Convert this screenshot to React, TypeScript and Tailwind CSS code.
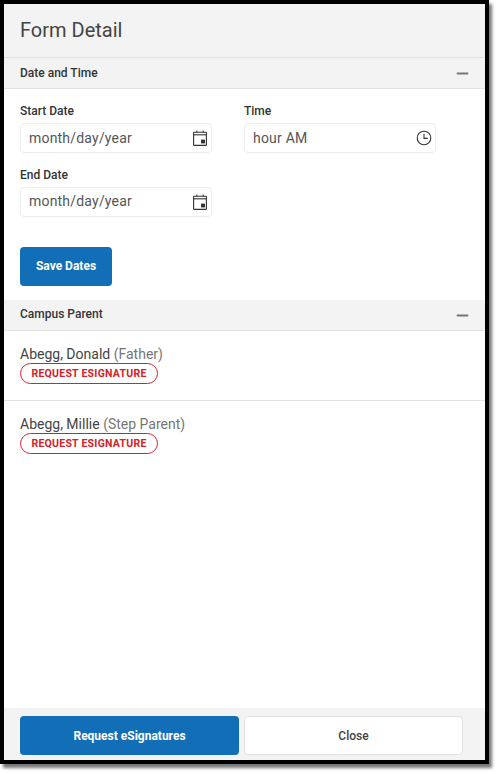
import { Minus } from "lucide-react"

function CalendarIcon() {
  return (
    <svg width="16" height="17" viewBox="0 0 16 17" fill="none" stroke="#333" strokeWidth="1.1">
      <rect x="1.6" y="2.2" width="12.8" height="13.2" rx="0.6" />
      <line x1="1.6" y1="4.8" x2="14.4" y2="4.8" />
      <line x1="4.8" y1="0.8" x2="4.8" y2="2.6" />
      <line x1="11.2" y1="0.8" x2="11.2" y2="2.6" />
      <rect x="9" y="9.6" width="4" height="3.8" fill="#333" stroke="none" />
    </svg>
  )
}

function ClockIcon() {
  return (
    <svg width="16" height="16" viewBox="0 0 16 16" fill="none" stroke="#333" strokeWidth="1.1">
      <circle cx="8" cy="8" r="6.8" />
      <path d="M8 3.8V8.4H11.8" />
    </svg>
  )
}

function Field({ label, value, icon, raised }: { label: string; value: string; icon: React.ReactNode; raised?: boolean }) {
  return (
    <div className="w-[192px]">
      <p className="text-[12px] leading-[16px] font-medium text-[#333] mb-[4px]">{label}</p>
      <div className="h-[30px] rounded-[4px] border border-[#ececec] flex items-center justify-between pl-[8px] pr-[3px]">
        <span className={`text-[14px] tracking-[0.2px] text-[#555] ${raised ? "pb-[2px]" : ""}`}>{value}</span>
        {icon}
      </div>
    </div>
  )
}

function SectionHead({ title, raised }: { title: string; raised?: boolean }) {
  return (
    <div className="h-[31px] bg-[#f3f3f3] border-b border-[#e2e2e2] flex items-center justify-between pl-[16px] pr-[14px]">
      <span className={`text-[12px] font-medium text-[#333] ${raised ? "pb-[2px]" : ""}`}>{title}</span>
      <Minus size={17} strokeWidth={2.8} color="#777" />
    </div>
  )
}

function ParentRow({ name, relation, border }: { name: string; relation: string; border?: boolean }) {
  return (
    <div className={`h-[70px] pl-[16px] pt-[15px] ${border ? "border-b border-[#e2e2e2]" : ""}`}>
      <p className="text-[14px] leading-[17px] text-[#444]">
        {name} <span className="text-[#767676]">{relation}</span>
      </p>
      <button className="w-[138px] h-[21px] rounded-full border border-[#d6202a] text-[10.5px] font-bold tracking-[0.25px] text-[#d6202a] flex items-center justify-center">
        REQUEST ESIGNATURE
      </button>
    </div>
  )
}

export default function App() {
  return (
    <div className="bg-white w-[496px] h-[774px] font-['Roboto',sans-serif]">
      <div className="w-[489px] h-[764px] border-4 border-black shadow-[3px_4px_3px_#777] bg-white flex flex-col">
        <div className="h-[54px] bg-[#f3f3f3] border-b border-[#e2e2e2] flex items-center pl-[16px] pb-[2px] flex-shrink-0">
          <h1 className="text-[20px] text-[#444]">Form Detail</h1>
        </div>
        <SectionHead title="Date and Time" />
        <div className="pl-[16px] pt-[14px] h-[211px] flex-shrink-0">
          <div className="flex gap-[32px]">
            <Field label="Start Date" value="month/day/year" icon={<CalendarIcon />} />
            <Field label="Time" value="hour AM" icon={<ClockIcon />} />
          </div>
          <div className="mt-[14px]">
            <Field label="End Date" value="month/day/year" icon={<CalendarIcon />} raised />
          </div>
          <button className="mt-[30px] w-[92px] h-[39px] rounded-[4px] bg-[#126fb7] text-white text-[12px] font-bold pb-[2px]">
            Save Dates
          </button>
        </div>
        <SectionHead title="Campus Parent" raised />
        <ParentRow name="Abegg, Donald" relation="(Father)" border />
        <ParentRow name="Abegg, Millie" relation="(Step Parent)" />
        <div className="flex-1" />
        <div className="h-[52px] bg-[#f3f3f3] flex gap-[5px] pl-[16px] pt-[8px] flex-shrink-0">
          <button className="w-[219px] h-[39px] rounded-[4px] bg-[#126fb7] text-white text-[12px] font-bold">
            Request eSignatures
          </button>
          <button className="w-[219px] h-[39px] rounded-[4px] bg-white border border-[#e2e2e2] text-[#444] text-[12px] font-medium">
            Close
          </button>
        </div>
      </div>
    </div>
  )
}
